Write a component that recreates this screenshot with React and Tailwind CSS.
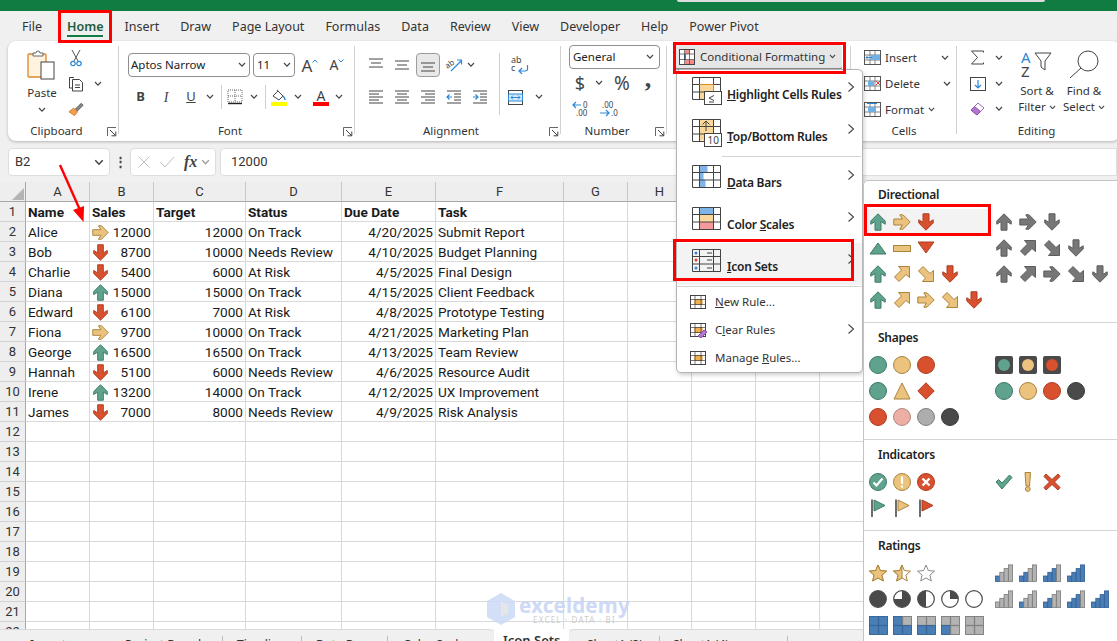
import React from 'react'

const UI = { fontFamily: '"Noto Sans", sans-serif' }
const CELLFONT = { fontFamily: 'Roboto, sans-serif' }

const GREEN = ['#5FA28E', '#3E7A68']
const YELLOW = ['#EBC27E', '#A9843B']
const RED = ['#D9502E', '#AE3D20']
const GRAY = ['#777777', '#5C5C5C']

const Arrow = ({ c, r = 0, size = 18 }) => {
  const diagonal = r % 90 !== 0
  return (
    <svg width={size} height={size} viewBox="0 0 18 18">
      <polygon
        points={diagonal
          ? '5.5,1.5 16.5,1.5 16.5,12.5 13,9.5 6,16.5 1.5,12 8.5,5'
          : '9,0.8 16.2,8 16.2,11.2 12,8.6 12,17.2 6,17.2 6,8.6 1.8,11.2 1.8,8'}
        fill={c[0]} stroke={c[1]} strokeWidth="1"
        transform={`rotate(${diagonal ? r - 45 : r} 9 9)`}
      />
    </svg>
  )
}

const Chev = ({ w = 8, c = '#444' }) => (
  <svg width={w} height={w * 0.7} viewBox="0 0 8 5.6">
    <polyline points="1,1 4,4.2 7,1" fill="none" stroke={c} strokeWidth="1.2" />
  </svg>
)

const Right = () => (
  <svg width="8" height="12" viewBox="0 0 8 12">
    <polyline points="1.5,1.5 6.5,6 1.5,10.5" fill="none" stroke="#444" strokeWidth="1.1" />
  </svg>
)

const Launcher = ({ className }) => (
  <svg className={className} width="10" height="10" viewBox="0 0 10 10">
    <polyline points="0.5,9 0.5,0.5 9,0.5" fill="none" stroke="#666" />
    <line x1="3" y1="3" x2="8.5" y2="8.5" stroke="#444" />
    <polyline points="4.5,8.8 8.8,8.8 8.8,4.5" fill="none" stroke="#444" />
  </svg>
)

const Lines = ({ rows, arrow }) => (
  <svg width="16" height="14" viewBox="0 0 16 14">
    {rows.map((r, i) => (
      <line key={i} x1={r[0]} x2={r[1]} y1={r[2]} y2={r[2]} stroke="#444" />
    ))}
    {arrow === 'l' && <path d="M6 7H1M3.5 4.5 1 7l2.5 2.5" fill="none" stroke="#2b88d8" strokeWidth="1.2" />}
    {arrow === 'r' && <path d="M1 7h5M3.5 4.5 6 7 3.5 9.5" fill="none" stroke="#2b88d8" strokeWidth="1.2" />}
  </svg>
)

const Slot = ({ w, children }) => <div className={`${w} flex items-center justify-center shrink-0`}>{children}</div>

const Label = ({ children, launcher, pad }) => (
  <div className={`relative h-[19px] pb-[2px] flex items-center justify-center text-[11.5px] text-[#333] ${pad || ''}`}>
    {children}
    {launcher && <Launcher className="absolute right-[2px] top-[5px]" />}
  </div>
)

const Clipboard = () => (
  <div className="w-[111px] shrink-0 flex flex-col">
    <div className="h-[81px] flex pl-[14px]">
      <div className="w-[40px] flex flex-col items-center pt-[8px]">
        <svg width="30" height="32" viewBox="0 0 30 32">
          <rect x="1" y="5" width="18" height="23" rx="1" fill="#fff2df" stroke="#d98a2b" strokeWidth="1.3" />
          <path d="M6 7V4h3a2 2 0 0 1 4 0h3v3z" fill="#fff" stroke="#666" />
          <rect x="14" y="13" width="13" height="17" fill="#fff" stroke="#444" />
        </svg>
        <span className="text-[11.5px] text-[#333] leading-[14px] mt-[5px]">Paste</span>
        <div className="mt-[7px]"><Chev /></div>
      </div>
      <div className="flex flex-col pt-[8px] ml-[6px]">
        <Slot w="w-[16px] h-[18px]">
          <svg width="12" height="18" viewBox="0 0 12 18">
            <path d="M2 1l6 11M10 1L4 12" stroke="#555" fill="none" />
            <circle cx="3" cy="14.5" r="2.2" fill="none" stroke="#2b88d8" strokeWidth="1.2" />
            <circle cx="9" cy="14.5" r="2.2" fill="none" stroke="#2b88d8" strokeWidth="1.2" />
          </svg>
        </Slot>
        <div className="flex items-center mt-[8px] h-[18px]">
          <svg width="17" height="16" viewBox="0 0 17 16">
            <path d="M6 1.5H1.5V12H4" fill="none" stroke="#444" />
            <path d="M4.5 3.5h7l3 3v8.5H4.5z" fill="#fff" stroke="#444" />
            <path d="M7 9h5M7 11.5h5" stroke="#444" />
          </svg>
          <div className="ml-[9px]"><Chev /></div>
        </div>
        <Slot w="w-[16px] h-[18px] mt-[7px]">
          <svg width="17" height="16" viewBox="0 0 17 16">
            <path d="M1 11l5-4 4 4-3 4z" fill="#f0a050" stroke="#d9772a" />
            <path d="M8 8l6-6 2 2-6 6z" fill="#888" stroke="#555" />
          </svg>
        </Slot>
      </div>
    </div>
    <Label launcher pad="pr-[14px]">Clipboard</Label>
  </div>
)

const Font = () => (
  <div className="w-[236px] shrink-0 flex flex-col">
    <div className="h-[81px] flex flex-col pt-[12px] pl-[9px]">
      <div className="flex items-center h-[24px]">
        <div className="w-[122px] h-[24px] border border-[#8f8f8f] rounded-[4px] flex items-center justify-between pl-[2px] pr-[3px] text-[11.5px] text-[#222]">
          Aptos Narrow <Chev />
        </div>
        <div className="w-[42px] h-[24px] ml-[3px] border border-[#8f8f8f] rounded-[4px] flex items-center justify-between pl-[3px] pr-[3px] text-[11.5px] text-[#222]">
          11 <Chev />
        </div>
        <Slot w="w-[28px] ml-[1px]">
          <span className="text-[17px] text-[#444] leading-none">A</span>
          <svg className="mb-[8px]" width="6" height="4" viewBox="0 0 6 4"><polyline points="0.5,3.5 3,1 5.5,3.5" fill="none" stroke="#2b88d8" /></svg>
        </Slot>
        <Slot w="w-[26px]">
          <span className="text-[14px] text-[#444] leading-none">A</span>
          <svg className="mb-[8px]" width="6" height="4" viewBox="0 0 6 4"><polyline points="0.5,0.5 3,3 5.5,0.5" fill="none" stroke="#2b88d8" /></svg>
        </Slot>
      </div>
      <div className="flex items-center h-[24px] mt-[8px] text-[#444]">
        <Slot w="w-[25px]"><span className="text-[13px] font-bold">B</span></Slot>
        <Slot w="w-[26px]"><span className="text-[14px] italic" style={{ fontFamily: '"Liberation Serif", serif' }}>I</span></Slot>
        <Slot w="w-[24px]"><span className="text-[13px] underline">U</span></Slot>
        <Slot w="w-[14px]"><Chev /></Slot>
        <div className="w-px h-[24px] bg-[#cfcfcf] ml-[4px]" />
        <Slot w="w-[26px]">
          <svg width="16" height="16" viewBox="0 0 16 16">
            <rect x="1" y="1" width="14" height="12" fill="none" stroke="#666" strokeDasharray="1 1" />
            <path d="M8 1v12M1 7h14" stroke="#666" strokeDasharray="1 1" />
            <path d="M1 14.5h14" stroke="#222" strokeWidth="1.4" />
          </svg>
        </Slot>
        <Slot w="w-[12px]"><Chev /></Slot>
        <div className="w-px h-[24px] bg-[#cfcfcf] ml-[5px]" />
        <Slot w="w-[26px]">
          <div className="flex flex-col items-center">
            <svg width="16" height="13" viewBox="0 0 16 13">
              <path d="M2 7l5-5 5 5-4 4z" fill="#fff" stroke="#444" />
              <path d="M7 2l-1-1M12 7q2 2 2 4" fill="none" stroke="#2b88d8" strokeWidth="1.4" />
            </svg>
            <div className="w-[16px] h-[4px] bg-[#ffff00]" />
          </div>
        </Slot>
        <Slot w="w-[12px]"><Chev /></Slot>
        <Slot w="w-[26px] ml-[4px]">
          <div className="flex flex-col items-center">
            <span className="text-[14px] leading-[13px]">A</span>
            <div className="w-[16px] h-[4px] bg-[#ff0000]" />
          </div>
        </Slot>
        <Slot w="w-[10px]"><Chev /></Slot>
      </div>
    </div>
    <Label launcher pad="pr-[14px]">Font</Label>
  </div>
)

const Alignment = () => (
  <div className="w-[206px] shrink-0 flex flex-col">
    <div className="h-[81px] flex pt-[12px]">
      <div className="w-[144px] pl-[8px] shrink-0">
        <div className="flex items-center h-[24px]">
          <Slot w="w-[26px]"><Lines rows={[[1, 15, 1], [3, 13, 5], [1, 15, 9]]} /></Slot>
          <Slot w="w-[26px]"><Lines rows={[[1, 15, 3], [3, 13, 7], [1, 15, 11]]} /></Slot>
          <Slot w="w-[26px]">
            <div className="w-[24px] h-[24px] bg-[#e8e8e8] border border-[#9c9c9c] rounded-[4px] flex items-center justify-center">
              <Lines rows={[[1, 15, 5], [3, 13, 9], [1, 15, 13]]} />
            </div>
          </Slot>
          <Slot w="w-[26px]">
            <svg width="18" height="18" viewBox="0 0 18 18">
              <text x="0" y="10" fontSize="8" fill="#444" transform="rotate(-35 6 8)">ab</text>
              <path d="M6 15L16 5M12 4h4.5V8.5" fill="none" stroke="#2b88d8" strokeWidth="1.2" />
            </svg>
          </Slot>
          <Slot w="w-[8px]"><Chev /></Slot>
        </div>
        <div className="flex items-center h-[24px] mt-[8px]">
          <Slot w="w-[26px]"><Lines rows={[[1, 15, 1], [1, 11, 4], [1, 15, 7], [1, 11, 10], [1, 15, 13]]} /></Slot>
          <Slot w="w-[26px]"><Lines rows={[[1, 15, 1], [3, 13, 4], [1, 15, 7], [3, 13, 10], [1, 15, 13]]} /></Slot>
          <Slot w="w-[26px]"><Lines rows={[[1, 15, 1], [5, 15, 4], [1, 15, 7], [5, 15, 10], [1, 15, 13]]} /></Slot>
          <Slot w="w-[26px]"><Lines arrow="l" rows={[[1, 15, 1], [8, 15, 4], [8, 15, 7], [8, 15, 10], [1, 15, 13]]} /></Slot>
          <Slot w="w-[26px]"><Lines arrow="r" rows={[[1, 15, 1], [8, 15, 4], [8, 15, 7], [8, 15, 10], [1, 15, 13]]} /></Slot>
        </div>
      </div>
      <div className="w-px h-[62px] bg-[#cfcfcf]" />
      <div className="pl-[8px] pt-[2px]">
        <Slot w="w-[20px] ml-[1px] h-[20px]">
          <div className="relative w-[20px] h-[20px] text-[9px] leading-[8px] text-[#444]">
            <span className="block pl-[2px] pt-[1px]">ab<br />c</span>
            <svg className="absolute right-0 bottom-[1px]" width="12" height="9" viewBox="0 0 12 9">
              <path d="M10.5 0v4a2 2 0 0 1-2 2H2M5 3 2 6l3 3" fill="none" stroke="#2b88d8" strokeWidth="1.2" />
            </svg>
          </div>
        </Slot>
        <div className="flex items-center mt-[10px] h-[24px]">
          <svg width="15" height="15" viewBox="0 0 15 15">
            <rect x="0.5" y="0.5" width="14" height="14" fill="none" stroke="#444" />
            <rect x="0.5" y="4" width="14" height="7" fill="#d6ebfa" stroke="#2b88d8" />
            <path d="M3 7.5h9M5 5.5l-2 2 2 2M10 5.5l2 2-2 2" fill="none" stroke="#2b88d8" />
          </svg>
          <div className="ml-[12px]"><Chev /></div>
        </div>
      </div>
    </div>
    <Label launcher pad="pr-[14px]">Alignment</Label>
  </div>
)

const NumberGroup = () => (
  <div className="w-[106px] shrink-0 flex flex-col">
    <div className="h-[81px] flex flex-col pt-[4px] pl-[8px]">
      <div className="w-[91px] h-[24px] border border-[#8f8f8f] rounded-[4px] flex items-center justify-between pl-[3px] pr-[5px] text-[11.5px] text-[#222]">
        General <Chev />
      </div>
      <div className="flex items-center h-[26px] mt-[1px] text-[#444]">
        <Slot w="w-[22px]"><span className="text-[18px] leading-none">$</span></Slot>
        <Slot w="w-[16px]"><Chev /></Slot>
        <Slot w="w-[30px]"><span className="text-[19px] leading-none">%</span></Slot>
        <Slot w="w-[22px]"><span className="text-[26px] font-bold leading-none mb-[8px]" style={{ fontFamily: '"Liberation Serif", serif' }}>,</span></Slot>
      </div>
      <div className="flex items-center h-[24px] mt-[1px]">
        {['l', 'r'].map(d => (
          <Slot key={d} w="w-[26px] relative">
            <svg width="20" height="16" viewBox="0 0 20 16">
              <text x={d === 'l' ? 11 : 4} y="7" fontSize="8" fill="#444">{d === 'l' ? '0' : '.00'}</text>
              <text x={d === 'l' ? 4 : 13} y="15" fontSize="8" fill="#444">{d === 'l' ? '.00' : '.0'}</text>
              {d === 'l'
                ? <path d="M9 4H1M4 1 1 4l3 3" fill="none" stroke="#2b88d8" strokeWidth="1.2" />
                : <path d="M2 12h9M8 9l3 3-3 3" fill="none" stroke="#2b88d8" strokeWidth="1.2" />}
            </svg>
          </Slot>
        ))}
      </div>
    </div>
    <Label launcher pad="pr-[14px]">Number</Label>
  </div>
)

const CondIcon = () => (
  <svg width="16" height="16" viewBox="0 0 16 16">
    <rect x="0.5" y="0.5" width="15" height="15" fill="#fff" stroke="#444" />
    <rect x="6" y="1" width="5" height="4" fill="#f48b8b" />
    <rect x="6" y="11" width="9" height="4" fill="#f48b8b" />
    <rect x="5" y="5" width="2" height="6" fill="#2b88d8" />
    <path d="M0 5h16M0 10.5h16M5.5 0v16M10.5 0v16" stroke="#444" strokeWidth="0.7" />
  </svg>
)

const Styles = () => (
  <div className="w-[184px] shrink-0 pl-[8px] pt-[4px]">
    <div className="w-[167px] h-[25px] bg-[#e6e6e6] border-b-2 border-[#8a8a8a] rounded-[3px] flex items-center pl-[4px] text-[11.5px] text-[#333]">
      <CondIcon />
      <span className="ml-[5px]">Conditional Formatting</span>
      <div className="ml-[4px]"><Chev w={7} /></div>
    </div>
  </div>
)

const CellIcon = ({ children }) => (
  <svg width="17" height="15" viewBox="0 0 17 15">
    <rect x="0.5" y="0.5" width="16" height="14" fill="#fff" stroke="#555" />
    <path d="M0 5h17M0 10h17M6 0v15M11 0v15" stroke="#555" strokeWidth="0.7" />
    {children}
  </svg>
)

const Cells = () => (
  <div className="w-[106px] shrink-0 flex flex-col">
    <div className="h-[81px] flex flex-col pt-[4px] pl-[13px] text-[11.5px] text-[#333]">
      <div className="h-[26px] flex items-center">
        <CellIcon><rect x="7" y="5" width="9" height="5" fill="#6fb1e4" /><path d="M8 7.5H2M4 5.5l-2 2 2 2" fill="none" stroke="#2b88d8" /></CellIcon>
        <span className="ml-[4px]">Insert</span>
        <div className="ml-[24px]"><Chev /></div>
      </div>
      <div className="h-[26px] flex items-center">
        <CellIcon><rect x="4" y="5" width="6" height="5" fill="#6fb1e4" /><path d="M12 5l4 4M16 5l-4 4" stroke="#e03c31" /></CellIcon>
        <span className="ml-[4px]">Delete</span>
        <div className="ml-[23px]"><Chev /></div>
      </div>
      <div className="h-[26px] flex items-center">
        <CellIcon><rect x="4" y="5" width="8" height="5" fill="#6fb1e4" /><path d="M3 1.5h10" stroke="#2b88d8" /></CellIcon>
        <span className="ml-[4px]">Format</span>
        <div className="ml-[4px]"><Chev w={7} /></div>
      </div>
    </div>
    <Label>Cells</Label>
  </div>
)

const Editing = () => (
  <div className="flex-1 flex flex-col">
    <div className="h-[81px] flex pt-[4px] pl-[13px] text-[11.5px] text-[#333]">
      <div className="flex flex-col w-[46px]">
        <div className="h-[26px] flex items-center">
          <svg width="15" height="15" viewBox="0 0 15 15">
            <path d="M13.5 2.5V1h-12l6 6.5-6 6.5h12v-1.5" fill="none" stroke="#444" />
          </svg>
          <div className="ml-[10px]"><Chev /></div>
        </div>
        <div className="h-[26px] flex items-center">
          <svg width="16" height="14" viewBox="0 0 16 14">
            <rect x="0.5" y="0.5" width="15" height="13" fill="none" stroke="#444" />
            <path d="M8 3v8M5 8l3 3 3-3" fill="none" stroke="#2b88d8" strokeWidth="1.2" />
          </svg>
          <div className="ml-[9px]"><Chev /></div>
        </div>
        <div className="h-[26px] flex items-center">
          <svg width="16" height="16" viewBox="0 0 16 16">
            <path d="M1 9l7-7 6 5-7 7z" fill="#fff" stroke="#a066bb" />
            <path d="M1 9l3.5-3.5 6 5L7 14z" fill="#b377cf" stroke="#8f4fae" />
          </svg>
          <div className="ml-[9px]"><Chev /></div>
        </div>
      </div>
      <div className="flex flex-col items-center w-[46px] -ml-[2px]">
        <svg className="mt-[5px]" width="32" height="28" viewBox="0 0 32 28">
          <text x="0" y="13" fontSize="15" fill="#2b88d8">A</text>
          <text x="0" y="27" fontSize="15" fill="#444">Z</text>
          <path d="M14 3h16l-6 8v9l-4-3v-6z" fill="#fff" stroke="#444" />
        </svg>
        <span className="leading-[16px] mt-[5px]">Sort &amp;</span>
        <span className="leading-[16px] flex items-center">Filter&nbsp;<Chev w={7} /></span>
      </div>
      <div className="flex flex-col items-center w-[46px] ml-[1px]">
        <svg className="mt-[5px]" width="32" height="28" viewBox="0 0 32 28">
          <circle cx="20" cy="11" r="10" fill="none" stroke="#444" />
          <path d="M13 18 2 28" stroke="#444" />
        </svg>
        <span className="leading-[16px] mt-[5px]">Find &amp;</span>
        <span className="leading-[16px] flex items-center">Select&nbsp;<Chev w={7} /></span>
      </div>
    </div>
    <Label><span className="-ml-[4px]">Editing</span></Label>
  </div>
)

const VSep = () => <div className="w-px h-[88px] mt-[5px] bg-[#d2d2d2] shrink-0 -ml-px" />

const Ribbon = () => (
  <div className="ml-[8px] w-[1112px] h-[100px] bg-white rounded-[8px] shadow-[0_1px_3px_rgba(0,0,0,0.25)] flex">
    <Clipboard /><VSep />
    <Font /><VSep />
    <Alignment /><VSep />
    <NumberGroup /><VSep />
    <Styles /><VSep />
    <Cells /><VSep />
    <Editing />
  </div>
)

const FormulaBar = () => (
  <div className="flex h-[28px] mt-[7px] ml-[8px] text-[13px] text-[#333]" style={CELLFONT}>
    <div className="w-[102px] bg-white border border-[#dedede] rounded-[4px] flex items-center justify-between pl-[6px] pr-[5px]">
      B2 <Chev w={10} />
    </div>
    <div className="w-[20px] flex items-center justify-center font-bold text-[#444]">⋮</div>
    <div className="w-[86px] bg-white border border-[#dedede] rounded-[4px] flex items-center pl-[6px]">
      <svg width="14" height="14" viewBox="0 0 14 14"><path d="M1.5 1.5l11 11M12.5 1.5l-11 11" stroke="#c0c0c0" /></svg>
      <svg className="ml-[8px]" width="16" height="14" viewBox="0 0 16 14"><path d="M1 7l5 5L15 2" fill="none" stroke="#c0c0c0" /></svg>
      <span className="ml-[9px] italic font-bold text-[16px] leading-none text-[#444]" style={{ fontFamily: '"Liberation Serif", serif' }}>fx</span>
      <div className="ml-[4px]"><Chev w={9} c="#999" /></div>
    </div>
    <div className="ml-[4px] flex-1 bg-white border border-[#dedede] rounded-l-[4px] flex items-center pl-[10px]">12000</div>
  </div>
)

const ROWS = [
  ['Alice', 12000, 12000, 'On Track', '4/20/2025', 'Submit Report', 'right'],
  ['Bob', 8700, 10000, 'Needs Review', '4/10/2025', 'Budget Planning', 'down'],
  ['Charlie', 5400, 6000, 'At Risk', '4/5/2025', 'Final Design', 'down'],
  ['Diana', 15000, 15000, 'On Track', '4/15/2025', 'Client Feedback', 'up'],
  ['Edward', 6100, 7000, 'At Risk', '4/8/2025', 'Prototype Testing', 'down'],
  ['Fiona', 9700, 10000, 'On Track', '4/21/2025', 'Marketing Plan', 'right'],
  ['George', 16500, 16500, 'On Track', '4/13/2025', 'Team Review', 'up'],
  ['Hannah', 5100, 6000, 'Needs Review', '4/6/2025', 'Resource Audit', 'down'],
  ['Irene', 13200, 14000, 'On Track', '4/12/2025', 'UX Improvement', 'up'],
  ['James', 7000, 8000, 'Needs Review', '4/9/2025', 'Risk Analysis', 'down'],
]
const LETTERS = ['A', 'B', 'C', 'D', 'E', 'F', 'G', 'H', 'I', 'J', 'K', 'L', 'M', 'N', 'O']
const HEAD = ['Name', 'Sales', 'Target', 'Status', 'Due Date', 'Task']
const cellBase = 'h-[20px] border-r border-b border-[#d9d9d9] pl-[2px] pr-[2px] pt-[1px] flex items-center whitespace-nowrap overflow-hidden text-[13.6px] text-[#1a1a1a]'
const headBase = 'h-[20px] bg-[#eeeeee] border-r border-b border-r-[#c8c8c8] border-b-[#a8a8a8] flex items-center justify-center text-[13px] text-[#333]'
const rowBase = 'h-[20px] pt-[1px] bg-[#eeeeee] border-r border-b border-r-[#a8a8a8] border-b-[#d2d2d2] flex items-center justify-center text-[13px] text-[#333]'

const Sheet = () => {
  const rows = []
  for (let r = 1; r <= 22; r++) {
    const data = r === 1 ? null : ROWS[r - 2]
    rows.push(<div key={`h${r}`} className={rowBase}>{r}</div>)
    LETTERS.forEach((l, c) => {
      let content = null
      let align = ''
      if (r === 1 && c < 6) content = <b className="font-bold">{HEAD[c]}</b>
      if (data && c === 0) content = data[0]
      if (data && c === 1) {
        const icon = { right: [YELLOW, 90], down: [RED, 180], up: [GREEN, 0] }[data[6]]
        content = (
          <div className="flex items-center justify-between w-full">
            <Arrow c={icon[0]} r={icon[1]} size={17} />
            <span>{data[1]}</span>
          </div>
        )
      }
      if (data && c === 2) { content = data[2]; align = ' justify-end' }
      if (data && c === 3) content = data[3]
      if (data && c === 4) { content = data[4]; align = ' justify-end' }
      if (data && c === 5) content = data[5]
      rows.push(<div key={`${r}${l}`} className={cellBase + align}>{content}</div>)
    })
  }
  return (
    <div className="mt-[6px] h-[447px] overflow-hidden bg-white" style={CELLFONT}>
      <div className="grid grid-cols-[26px_64px_64px_92px_96px_94px_128px_64px_64px_64px_64px_64px_64px_64px_64px_64px] w-[1210px]">
        <div className="h-[20px] bg-[#eeeeee] border-r border-b border-[#a8a8a8] relative">
          <svg className="absolute right-[1px] bottom-[1px]" width="12" height="12" viewBox="0 0 12 12"><polygon points="12,0 12,12 0,12" fill="#b4b4b4" /></svg>
        </div>
        {LETTERS.map(l => <div key={l} className={headBase}>{l}</div>)}
        {rows}
      </div>
    </div>
  )
}

const SheetTabs = () => (
  <div className="h-[12px] flex text-[12px] text-[#333] overflow-hidden" style={UI}>
    <div className="w-[494px] h-full bg-[#f0f0f0] rounded-tr-[6px] border-t border-[#d9d9d9] flex items-start pt-[6px] pl-[30px]">
      <span className="w-[95px]">Inventory</span>
      <span className="w-[98px] pr-[8px] border-r border-[#bbb]">Project Board</span>
      <span className="w-[79px] pl-[14px] border-r border-[#bbb]">Timeline</span>
      <span className="w-[86px] pl-[14px] border-r border-[#bbb]">Data Bars</span>
      <span className="pl-[15px]">Color Scales</span>
    </div>
    <div className="w-[75px] h-full bg-white pl-[9px] pt-[4px] font-semibold text-[13px] leading-[14px]">Icon Sets</div>
    <div className="flex-1 h-full bg-[#f0f0f0] rounded-tl-[6px] border-t border-[#d9d9d9] flex items-start pt-[6px] pl-[18px]">
      <span className="w-[73px] border-r border-[#bbb]">Sheet1 (3)</span>
      <span className="w-[128px] pl-[13px] border-r border-[#bbb]">Sheet1 (4)</span>
    </div>
  </div>
)

const grid = 'M0.5 0.5h28v22h-28zM0.5 7.5h28M0.5 15h28M7.5 0.5v22M21.5 0.5v22'

const MenuBig = ({ icon, label, active }) => (
  <div className={`h-[42px] flex items-center relative ${active ? 'bg-[#f3f3f3]' : ''}`}>
    <div className="ml-[15px] w-[36px] h-[30px]">{icon}</div>
    <span className="ml-[-1px] mt-[6px] text-[12px] font-semibold text-[#222] tracking-[-0.25px]">{label}</span>
    <div className="absolute right-[7px] top-[10px]"><Right /></div>
  </div>
)

const MenuSmall = ({ icon, label, more }) => (
  <div className="h-[28px] flex items-center relative">
    <div className="ml-[13px] w-[25px]">{icon}</div>
    <span className="text-[11.5px] text-[#333]">{label}</span>
    {more && <div className="absolute right-[7px] top-[7px]"><Right /></div>}
  </div>
)

const BigSvg = ({ children }) => (
  <svg width="36" height="30" viewBox="0 0 36 30">
    {children}
  </svg>
)

const Table = () => <path d={grid} fill="none" stroke="#444" />

const SmallTable = ({ extra }) => (
  <svg width="18" height="16" viewBox="0 0 18 16">
    <rect x="0.5" y="1.5" width="15" height="13" fill="#fff" stroke="#444" />
    <rect x="5" y="5.5" width="7" height="5" fill="#f4b04a" stroke="#d98a2b" />
    <path d="M0.5 5.5h15M0.5 10.5h15M5 1.5v13M11 1.5v13" stroke="#444" strokeWidth="0.7" />
    {extra}
  </svg>
)

const CondMenu = () => (
  <div className="absolute left-[676px] top-[69px] w-[187px] h-[304px] bg-white border border-[#b5b5b5] rounded-[5px] shadow-[1px_2px_4px_rgba(0,0,0,0.2)] z-10 pt-[1px]" style={UI}>
    <MenuBig
      label={<><u>H</u>ighlight Cells Rules</>}
      icon={<BigSvg>
        <rect x="7.5" y="7.5" width="14" height="15" fill="#fad79a" />
        <Table />
        <path d="M7.5 7.5h14v15" fill="none" stroke="#d98a2b" />
        <rect x="12.5" y="14.5" width="17" height="13" fill="#fff" stroke="#444" />
        <path d="M22 18.5L17 21l5 2.5M17 25h5" stroke="#444" fill="none" />
      </BigSvg>}
    />
    <MenuBig
      label={<><u>T</u>op/Bottom Rules</>}
      icon={<BigSvg>
        <rect x="7.5" y="0.5" width="14" height="21" fill="#fad79a" />
        <Table />
        <path d="M14 12V2M10.5 5.5 14 2l3.5 3.5" fill="none" stroke="#444" />
        <rect x="12.5" y="14.5" width="17" height="13" fill="#fff" stroke="#444" />
        <text x="15.5" y="25" fontSize="10" fill="#444">10</text>
      </BigSvg>}
    />
    <div className="h-px bg-[#d4d4d4] ml-[45px] mr-px mt-[1px] mb-[2px]" />
    <MenuBig
      label={<><u>D</u>ata Bars</>}
      icon={<BigSvg>
        <rect x="7.5" y="0.5" width="8" height="7" fill="#7fb4e8" />
        <rect x="7.5" y="7.5" width="4" height="7.5" fill="#7fb4e8" />
        <rect x="7.5" y="15" width="6" height="7.5" fill="#7fb4e8" />
        <Table />
      </BigSvg>}
    />
    <MenuBig
      label={<>Color <u>S</u>cales</>}
      icon={<BigSvg>
        <rect x="7.5" y="0.5" width="14" height="7" fill="#7fb4e8" />
        <rect x="7.5" y="7.5" width="14" height="7.5" fill="#fad79a" />
        <rect x="7.5" y="15" width="14" height="7.5" fill="#f59a9a" />
        <Table />
      </BigSvg>}
    />
    <MenuBig
      active
      label={<><u>I</u>con Sets</>}
      icon={<BigSvg>
        <Table />
        <circle cx="4" cy="4" r="1.5" fill="#2b88d8" />
        <circle cx="4" cy="11" r="1.5" fill="#e03c31" />
        <circle cx="4" cy="19" r="1.5" fill="#2b88d8" />
        <path d="M15 4h5M15 11h5M15 19h5" stroke="#444" />
      </BigSvg>}
    />
    <div className="h-px bg-[#d4d4d4] mt-px mb-[1px]" />
    <MenuSmall icon={<SmallTable />} label={<><u>N</u>ew Rule...</>} />
    <MenuSmall more label={<>C<u>l</u>ear Rules</>} icon={<SmallTable extra={<path d="M8 14l6-6 3 2-6 6z" fill="#b377cf" stroke="#8f4fae" />} />} />
    <MenuSmall icon={<SmallTable />} label={<>Manage <u>R</u>ules...</>} />
  </div>
)

const Dot = ({ c, size = 18 }) => <div className="rounded-full border" style={{ width: size, height: size, background: c[0], borderColor: c[1] }} />

const Traffic = ({ c }) => (
  <div className="w-[18px] h-[18px] bg-[#4a4a4a] rounded-[2px] flex items-center justify-center">
    <div className="w-[12px] h-[12px] rounded-full" style={{ background: c[0] }} />
  </div>
)

const Tri = ({ c, down, wide }) => (
  <svg width="18" height="18" viewBox="0 0 18 18">
    <polygon points={down ? '1,3 17,3 9,14' : wide ? '9,1 17,17 1,17' : '1,15 9,4 17,15'} fill={c[0]} stroke={c[1]} />
  </svg>
)

const Dash = () => <div className="w-[18px] h-[7px] bg-[#EBC27E] border border-[#A9843B]" />

const Diamond = () => (
  <svg width="18" height="18" viewBox="0 0 18 18">
    <polygon points="9,0.8 17.2,9 9,17.2 0.8,9" fill={RED[0]} stroke={RED[1]} strokeLinejoin="round" />
  </svg>
)

const Status = ({ kind, c }) => (
  <svg width="18" height="18" viewBox="0 0 18 18">
    <circle cx="9" cy="9" r="8.5" fill={c[0]} stroke={c[1]} />
    {kind === 'ok' && <path d="M4.5 9.5l3 3 6-7" fill="none" stroke="#fff" strokeWidth="2.2" />}
    {kind === 'warn' && <path d="M9 3.5v7.5M9 12.5v2" fill="none" stroke="#fff" strokeWidth="2.2" />}
    {kind === 'bad' && <path d="M5.5 5.5l7 7M12.5 5.5l-7 7" fill="none" stroke="#fff" strokeWidth="2.4" />}
  </svg>
)

const BareCheck = () => (
  <svg width="18" height="18" viewBox="0 0 18 18"><polygon points="1,9 3.5,6.5 7,10 14.5,2 17,4.5 7,16" fill={GREEN[0]} stroke={GREEN[1]} /></svg>
)
const BareWarn = () => (
  <svg width="18" height="20" viewBox="0 0 18 20"><polygon points="6,0.5 11.5,0.5 10.5,14 7,14" fill={YELLOW[0]} stroke={YELLOW[1]} /><circle cx="8.8" cy="17" r="2.4" fill={YELLOW[0]} stroke={YELLOW[1]} /></svg>
)
const BareX = () => (
  <svg width="18" height="18" viewBox="0 0 18 18"><polygon points="3,1 9,6.5 15,1 17,3.5 11.5,9 17,14.5 15,17 9,11.5 3,17 1,14.5 6.5,9 1,3.5" fill={RED[0]} stroke={RED[1]} /></svg>
)

const Flag = ({ c }) => (
  <svg width="18" height="18" viewBox="0 0 18 18">
    <rect x="2" y="0.5" width="2" height="18" fill="#6e6e6e" />
    <polygon points="5,1 16,6.5 5,12" fill={c[0]} stroke={c[1]} />
  </svg>
)

const Star = ({ fill }) => {
  const pts = '9,1 11.4,6.6 17.5,7.1 12.9,11.1 14.3,17 9,13.9 3.7,17 5.1,11.1 0.5,7.1 6.6,6.6'
  return (
    <svg width="18" height="18" viewBox="0 0 18 18">
      <polygon points={pts} fill="#fff" stroke={fill === 0 ? '#8a8a8a' : '#A9843B'} />
      {fill === 1 && <polygon points={pts} fill={YELLOW[0]} stroke="#A9843B" />}
      {fill === 0.5 && <polygon points="9,1 9,13.9 3.7,17 5.1,11.1 0.5,7.1 6.6,6.6" fill={YELLOW[0]} stroke="#A9843B" />}
    </svg>
  )
}

const Pie = ({ v }) => (
  <svg width="18" height="18" viewBox="0 0 18 18">
    <circle cx="9" cy="9" r="8.3" fill={v === 4 ? '#4a4a4a' : '#fff'} stroke="#4a4a4a" strokeWidth="1.2" />
    {v === 3 && <path d="M9 9H0.7A8.3 8.3 0 1 0 9 0.7z" fill="#4a4a4a" />}
    {v === 2 && <path d="M9 0.7A8.3 8.3 0 0 0 9 17.3z" fill="#4a4a4a" />}
    {v === 1 && <path d="M9 9V0.7A8.3 8.3 0 0 1 17.3 9z" fill="#4a4a4a" />}
  </svg>
)

const Signal = ({ n }) => (
  <svg width="18" height="18" viewBox="0 0 18 18">
    {[0, 1, 2, 3].map(i => (
      <rect key={i} x={0.5 + i * 4.3} y={12 - i * 3.7} width="4.2" height={5.5 + i * 3.7}
        fill={i < n ? '#4a7fb5' : '#b3b3b3'} stroke={i < n ? '#2f5f94' : '#7a7a7a'} strokeWidth="0.8" />
    ))}
  </svg>
)

const Quad = ({ on }) => (
  <svg width="19" height="19" viewBox="0 0 19 19">
    {[[0.5, 0.5, 0], [9.7, 0.5, 1], [0.5, 9.7, 2], [9.7, 9.7, 3]].map(([x, y, i]) => (
      <rect key={i} x={x} y={y} width="8.8" height="8.8"
        fill={on.includes(i) ? '#4a7fb5' : '#b3b3b3'} stroke={on.includes(i) ? '#2f5f94' : '#7a7a7a'} strokeWidth="0.9" />
    ))}
  </svg>
)

const Set = ({ items, className }) => (
  <div className={`flex items-center ${className}`}>
    {items.map((x, i) => <div key={i} className="w-[24px] flex justify-center">{x}</div>)}
  </div>
)

const IconRow = ({ left, right, active }) => (
  <div className="flex h-[26px] pl-[2px]">
    <Set items={left} className={`w-[124px] ${active ? 'bg-[#f3f3f3]' : ''}`} />
    {right && <Set items={right} className="ml-[2px]" />}
  </div>
)

const U = 0, D = 180, R = 90, UR = 45, DR = 135
const arrows = (c, list) => list.map(r => <Arrow c={c} r={r} />)

const Section = ({ title, first, children }) => (
  <div className={`${first ? '' : 'border-t border-[#d4d4d4]'} pb-[9px]`}>
    <div className={`${first ? 'h-[28px]' : 'h-[29px]'} pl-[14px] flex items-center text-[12px] font-semibold text-[#222] tracking-[-0.25px]`}>{title}</div>
    {children}
  </div>
)

const IconSets = () => (
  <div className="absolute left-[863px] top-[180px] w-[260px] h-[470px] bg-white border border-[#c4c4c4] rounded-tl-[5px] z-20" style={UI}>
    <Section first title="Directional">
      <IconRow active
        left={[<Arrow c={GREEN} r={U} />, <Arrow c={YELLOW} r={R} />, <Arrow c={RED} r={D} />]}
        right={arrows(GRAY, [U, R, D])} />
      <IconRow
        left={[<Tri c={GREEN} />, <Dash />, <Tri c={RED} down />]}
        right={arrows(GRAY, [U, UR, DR, D])} />
      <IconRow
        left={[<Arrow c={GREEN} r={U} />, <Arrow c={YELLOW} r={UR} />, <Arrow c={YELLOW} r={DR} />, <Arrow c={RED} r={D} />]}
        right={arrows(GRAY, [U, UR, R, DR, D])} />
      <IconRow
        left={[<Arrow c={GREEN} r={U} />, <Arrow c={YELLOW} r={UR} />, <Arrow c={YELLOW} r={R} />, <Arrow c={YELLOW} r={DR} />, <Arrow c={RED} r={D} />]} />
    </Section>
    <Section title="Shapes">
      <IconRow left={[<Dot c={GREEN} />, <Dot c={YELLOW} />, <Dot c={RED} />]} right={[<Traffic c={GREEN} />, <Traffic c={YELLOW} />, <Traffic c={RED} />]} />
      <IconRow left={[<Dot c={GREEN} />, <Tri c={YELLOW} wide />, <Diamond />]} right={[<Dot c={GREEN} />, <Dot c={YELLOW} />, <Dot c={RED} />, <Dot c={['#4a4a4a', '#3a3a3a']} />]} />
      <IconRow left={[<Dot c={RED} />, <Dot c={['#EDAFA3', '#b08a84']} />, <Dot c={['#ADADAD', '#808080']} />, <Dot c={['#4a4a4a', '#3a3a3a']} />]} />
    </Section>
    <Section title="Indicators">
      <IconRow left={[<Status kind="ok" c={GREEN} />, <Status kind="warn" c={YELLOW} />, <Status kind="bad" c={RED} />]} right={[<BareCheck />, <BareWarn />, <BareX />]} />
      <IconRow left={[<Flag c={GREEN} />, <Flag c={YELLOW} />, <Flag c={RED} />]} />
    </Section>
    <Section title="Ratings">
      <IconRow left={[<Star fill={1} />, <Star fill={0.5} />, <Star fill={0} />]} right={[1, 2, 3, 4].map(n => <Signal n={n} />)} />
      <IconRow left={[4, 3, 2, 1, 0].map(v => <Pie v={v} />)} right={[0, 1, 2, 3, 4].map(n => <Signal n={n} />)} />
      <IconRow left={[[0, 1, 2, 3], [0, 2, 3], [2, 3], [2], []].map(o => <Quad on={o} />)} />
    </Section>
  </div>
)

const Watermark = () => (
  <div className="absolute left-[486px] top-[593px] z-[5] flex items-center pointer-events-none opacity-90" style={UI}>
    <svg width="30" height="32" viewBox="0 0 30 32">
      <polygon points="15,0 29,8 29,24 15,32 1,24 1,8" fill="#cfdcf6" />
      <polygon points="15,8 22,12 22,20 15,24" fill="#e4e4e4" />
    </svg>
    <div className="ml-[3px] flex flex-col items-center">
      <span className="text-[20.5px] font-bold leading-[20px] text-[#c9d6f4] tracking-[0.2px]">exceldemy</span>
      <span className="text-[8px] leading-[9px] text-[#c9c9c9] tracking-[1.2px]">EXCEL · DATA · BI</span>
    </div>
  </div>
)

const Marks = () => (
  <>
    <div className="absolute left-[58px] top-[10px] w-[54px] h-[33px] border-[3px] border-[#ff0000] z-30" />
    <div className="absolute left-[673px] top-[42px] w-[173px] h-[32px] border-[3px] border-[#ff0000] z-30" />
    <div className="absolute left-[673px] top-[239px] w-[181px] h-[42px] border-[3px] border-[#ff0000] z-30" />
    <div className="absolute left-[864px] top-[204px] w-[127px] h-[32px] border-[3px] border-[#ff0000] z-30" />
    <svg className="absolute left-[50px] top-[160px] z-30" width="44" height="66" viewBox="0 0 44 66">
      <line x1="10" y1="5" x2="30" y2="50" stroke="#ff0000" strokeWidth="2.4" />
      <polygon points="33.5,62 23,50 34,46" fill="#ff0000" />
    </svg>
  </>
)

const TABS = ['File', 'Home', 'Insert', 'Draw', 'Page Layout', 'Formulas', 'Data', 'Review', 'View', 'Developer', 'Help', 'Power Pivot']

export default function App() {
  return (
    <div className="relative w-[1117px] h-[641px] overflow-hidden bg-[#f0f0f0]" style={UI}>
      <div className="h-[11px] bg-[#107C41] relative">
        <div className="absolute left-[677px] top-0 w-[368px] h-[2px] bg-[#dcdcdc] rounded-b-[2px]" />
      </div>
      <div className="h-[30px] flex items-center pl-[22px] gap-[21px] text-[12.5px] text-[#333]">
        {TABS.map(t => (
          <div key={t} className={`relative h-full pt-[3px] flex items-center ${t === 'Home' ? 'font-semibold text-[#1f5c3d] ml-[4px]' : ''}`}>
            {t}
            {t === 'Home' && <div className="absolute left-0 right-0 bottom-[4px] h-[2px] bg-[#107C41]" />}
          </div>
        ))}
      </div>
      <Ribbon />
      <FormulaBar />
      <Sheet />
      <SheetTabs />
      <CondMenu />
      <IconSets />
      <Watermark />
      <Marks />
    </div>
  )
}
